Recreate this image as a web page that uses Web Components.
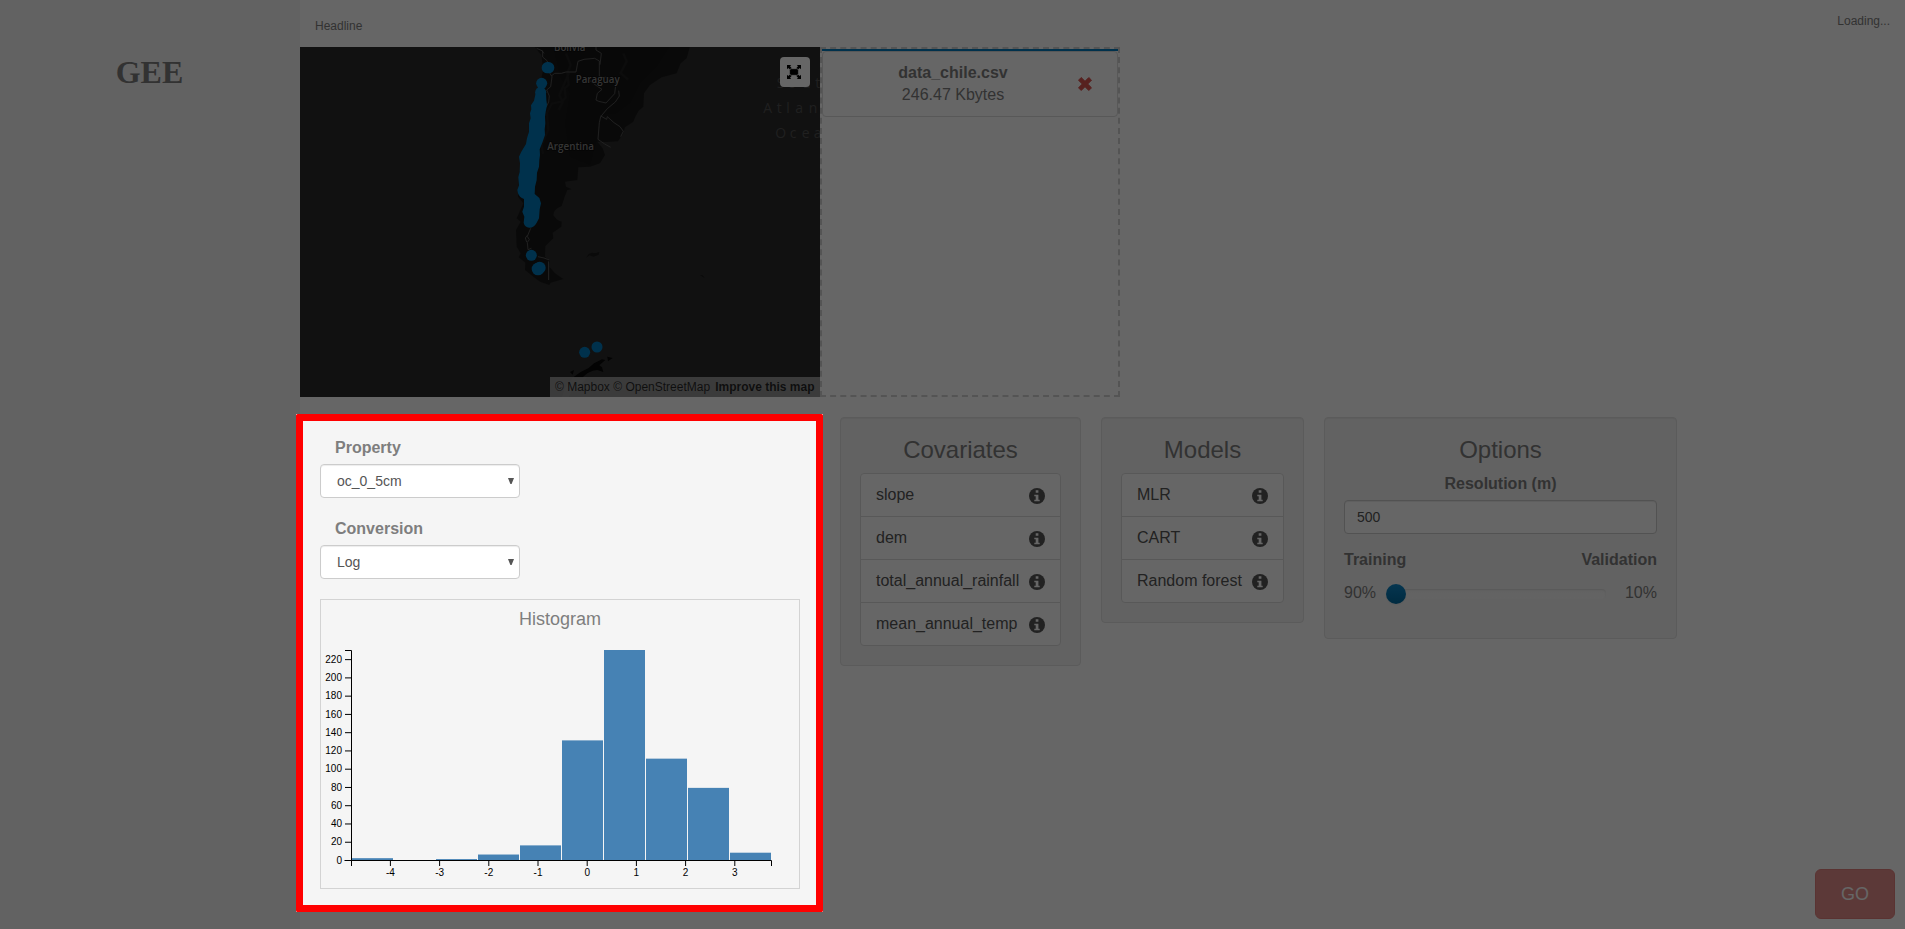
<!DOCTYPE html>
<html lang="en">
<head>
<meta charset="utf-8">
<title>GEE</title>
<style>
html,body{margin:0;height:100%;overflow:hidden;background:#fff}
body{font:16px/22px "Liberation Sans",Arial,sans-serif;color:#7e7e7e}
</style>
</head>
<body>
<gee-app></gee-app>
<script>
const define=(name,html,init)=>customElements.define(name,class extends HTMLElement{
  constructor(){super();this.attachShadow({mode:'open'}).innerHTML='<style>*{box-sizing:border-box}</style>'+html;}
  connectedCallback(){if(init)init(this,this.shadowRoot);}
});

define('side-bar',`<style>:host{display:block;width:300px;flex:none;background:#f5f5f5;padding-top:54px;box-sizing:border-box}
h1{margin:0 5px 0 0;text-align:center;font:bold 32px/37px "Liberation Serif",serif;padding-left:4px}</style><h1><slot></slot></h1>`);

define('map-view',`<style>:host{display:block;position:relative;width:520px;height:350px;background:#2b2b2b;overflow:hidden}
svg.map{display:block}
.full{position:absolute;right:10px;top:10px;width:30px;height:30px;border-radius:4px;background:#fff;display:grid;place-items:center;padding-right:2px}
.attr{position:absolute;right:0;bottom:0;height:20px;width:270px;padding:0 5.500px 0 5px;background:rgba(255,255,255,.5);font-size:12px;line-height:20px;color:rgba(0,0,0,.75);white-space:nowrap;display:flex;justify-content:space-between}
text{font-family:"Open Sans","Noto Sans",sans-serif}
.l{font-size:31px;fill:#858585;stroke:#0c0c0c;stroke-width:5px;paint-order:stroke;font-weight:600}
.o{font-size:42px;fill:#505050}
</style>
<svg class="map" width="520" height="350" viewBox="0 0 520 350"><g transform="translate(190 -7) scale(.33333)">
<path fill="#181818" d="M132 18L154 45L160 90L150 130L148 180L122 240L110 320L88 400L84 470L100 490L80 535L92 545L78 570L80 620L92 640L86 652L106 668L105 690L130 710L150 725L178 735L182 728L220 717L195 700L178 680L180 662L165 650L166 618L190 595L188 578L214 560L215 545Q198 540 190 525Q190 508 215 498L224 470L232 450L245 448L228 440L225 425L262 420L265 382L300 380L330 370L345 345L338 325L322 305L350 306L384 304L400 280L405 262L430 245L436 230L446 212L460 200L462 160L480 135L515 112L560 100L572 70L590 55L600 18Z"/>
<path fill="#131313" d="M190 18L540 18L500 80L450 130L420 190L380 220L330 225L320 300L300 375L240 350L225 250L240 160L210 110Z" opacity=".5"/>
<g fill="none" stroke="#202020" stroke-width="7" opacity=".8"><path d="M228 40l14 35-10 25 4 35-12 10 3 28-14 12-28 6-14 28 4 50-20 45 4 28M238 96l-30 70 10 20-12 24M400 40l10 24-18 35 22 20"/></g>
<g fill="none" stroke="#5c5c5c" stroke-width="2.5"><path d="M140 25l18 8 0 18 14 12 0 25 14 22-4 30-12 10 8 18-2 18-8 16M154 30l8 10M184 108l10-8 20 0 14-4 30 0 6-32 18-6 32-3 14 8 0 24 0 22 30 4 4 8 16 8-4 32-26 28-22-5-8-4 4-20 14-12-18-12-18-14M318 18l0 12 16 10-4 34M386 152l2 16-12 18-24 20-20 24-4 18-4 50 20 14 18 10M332 228l18 10 2-8 20 18 18 12 10 14-8 16M122 565l-10 24 6 10-6 8 2 22 10-4M112 586l-6 8 4 12M144 650l18 4 16 6"/><path d="M176 664v56" stroke-width="3"/></g>
<g fill="#191919"><path d="M288 654l8-12 10-4 10 2 12-4-2 8-16 6-12-4zM630 706l8 0 6 8z"/><path fill="#080808" d="M240 996l12-6-4 14zM352 950l16 4-14 10zM250 1012l22-16 24-12 16-14 24-12 10 2-18 16 8 6 4 14-18-6-14 2-16 8-14 12z"/><path fill="#666" d="M250 1012h40l-18 22-26 12-10 26h-20l10-28z" opacity=".18"/></g>
<text class="l" x="192" y="33" textLength="94" lengthAdjust="spacingAndGlyphs">Bolivia</text><text class="l" x="257" y="129" textLength="132" lengthAdjust="spacingAndGlyphs">Paraguay</text><text class="l" x="172" y="329" textLength="140" lengthAdjust="spacingAndGlyphs">Argentina</text>
<text class="o" x="860 893 936 976" y="144">Sout</text><text class="o" x="820 860 889 916 956" y="219">Atlan</text><text class="o" x="856 899 935 971" y="293">Ocea</text>
<g fill="#007cbf"><rect x="155" y="66" width="38" height="34" rx="17"/><circle cx="155" cy="130" r="16.500"/><circle cx="152" cy="157" r="16.500"/><circle cx="284" cy="937" r="16.500"/><circle cx="321" cy="921" r="16.500"/><circle cx="124" cy="646" r="16.500"/><circle cx="144" cy="687" r="19"/><circle cx="149" cy="683" r="18"/>
<path d="M137 160L168 160L169 180L171 195L167 215L165 230L166 250L164 268L165 285L158 305L149 328L150 345L148 360L147 380L141 398L140 420L135 440L134 462L148 474L153 490L149 508L147 535L140 548Q132 563 118 563Q104 562 101 548L103 530L97 515L102 500L102 477Q88 472 84 460L82 450L87 436L85 412L89 395L90 370L87 350L94 335L108 312L111 295L117 275L117 250L122 235L120 220L124 208L123 196L132 182Z"/></g>
</g></svg>
<div class="full"><svg width="14" height="14" viewBox="0 0 14 14"><path d="M0 0h4.200L3 1.300l1.800 1.900-1.600 1.600L1.300 3 0 4.200zM14 0v4.200L12.700 3l-1.900 1.800-1.600-1.600L11 1.300 9.800 0zM0 14V9.800L1.300 11l1.900-1.800 1.600 1.600L3 12.700 4.200 14zM14 14H9.800l1.200-1.300-1.800-1.900 1.600-1.600 1.900 1.800L14 9.800z"/><rect x="2.600" y="3.700" width="8.800" height="6.600" rx="1.800" stroke="#fff" stroke-width=".6"/></svg></div>
<div class="attr"><span>© Mapbox © OpenStreetMap</span><b>Improve this map</b></div>`);

define('drop-zone',`<style>:host{display:block;width:300px;height:350px;border:2px dashed #d3d3d3;box-sizing:border-box}
.bar{height:2px;background:#007cbf}
.card{height:66px;border:1px solid #ddd;border-radius:4px;display:flex;align-items:center}
.t{width:260px;text-align:center;line-height:22px}.t b{display:block}svg{display:block;margin-left:-5px}</style>
<div class="bar"></div><div class="card"><div class="t"><b>data_chile.csv</b><span>246.47 Kbytes</span></div><svg width="14" height="14" viewBox="0 0 14 14"><path d="M3.200.5L7 4.300 10.800.5l2.700 2.700L9.700 7l3.800 3.800-2.700 2.700L7 9.700l-3.800 3.800L.5 10.800 4.300 7 .5 3.200z" fill="#d9534f" stroke="#d9534f" stroke-linejoin="round"/></svg></div>`);

define('well-panel',`<style>:host{display:block;background:#f5f5f5;border:1px solid #e3e3e3;border-radius:4px;padding:19px;box-sizing:border-box;box-shadow:inset 0 1px 1px rgba(0,0,0,.05);flex:none}
h3{margin:0 0 10px;font-size:24px;line-height:26px;font-weight:400;text-align:center}</style><h3></h3><slot></slot>`,
(h,r)=>r.querySelector('h3').textContent=h.getAttribute('heading'));

define('info-item',`<style>:host{display:flex;justify-content:space-between;height:44px;margin-bottom:-1px;padding:10px 15px;border:1px solid #ddd;background:#fff;color:#555;box-sizing:border-box;line-height:22px}
:host(:first-of-type){border-radius:4px 4px 0 0}:host(:last-of-type){border-radius:0 0 4px 4px;margin-bottom:0}
svg{margin-top:4px}</style><slot></slot><svg width="16" height="16" viewBox="0 0 16 16"><circle cx="8" cy="8" r="8" fill="#555"/><path fill="#fff" d="M6.700 2.300h2.700v2.400H6.700zM5.300 6.700h4.100v5h1.300v1.600H5.300v-1.600h1.400V8.300H5.300z"/></svg>`);

define('select-field',`<style>:host{display:block}label{display:block;font-weight:700;line-height:22px;padding:1px 0 0 15px;margin-bottom:5px}
.s{width:200px;height:34px;border:1px solid #ccc;border-radius:4px;background:#fff;box-shadow:inset 0 1px 1px rgba(0,0,0,.075);font-size:14px;line-height:32px;color:#555;padding:0 5px 0 16px;display:flex;justify-content:space-between;align-items:center}</style>
<label></label><div class="s"><slot></slot><svg width="6" height="6" viewBox="0 0 6 6"><path d="M0 0h6L3.600 6H2.400z" fill="#555"/></svg></div>`,
(h,r)=>r.querySelector('label').textContent=h.getAttribute('label'));

define('histo-gram',`<style>:host{display:block;width:480px;height:290px;border:1px solid #d3d3d3;box-sizing:border-box;padding-top:9px}
h4{margin:0;font-size:18px;line-height:20px;font-weight:400;text-align:center}svg{display:block}text{font-size:10px;fill:#000}</style><h4>Histogram</h4><svg width="478" height="254"></svg>`,
(h,r)=>{
  const H=210,W=420,X=31,Y=21;let s='';
  [2,0,1,6,16,131,230,111,79,8].forEach((v,i)=>{const b=v*H/230;s+=`<rect x="${X+i*42}" y="${Y+H-b}" width="41" height="${b}" fill="steelblue"/>`;});
  for(let v=0;v<=220;v+=20){const y=Y+H-v*H/230+.5;s+=`<path d="M${X-7} ${y}h7" stroke="#000"/><text x="${X-10}" y="${y+3.2}" text-anchor="end">${v}</text>`;}
  for(let v=-4;v<=3;v++){const x=X+235.200+v*49.200;s+=`<path d="M${x} ${Y+H}v6" stroke="#000"/><text x="${x}" y="${Y+H+16}" text-anchor="middle">${v}</text>`;}
  s+=`<path d="M${X-7} ${Y+.5}h6.500v${H}h-7M${X-.5} ${Y+H+6}v-5.500h${W}v5.500" fill="none" stroke="#000"/>`;
  r.querySelector('svg').innerHTML=s;
});

define('property-panel',`<style>:host{display:block;position:relative;z-index:2;width:527px;height:498px;margin:-3px 0 0 -4px;background:#fff;flex:none}
.b{height:100%;border:7px solid #f00;border-radius:1.500px;background:#f5f5f5;padding:15px 17px;display:flex;flex-direction:column}
select-field{margin-bottom:19px}histo-gram{margin-top:1px}</style>
<div class="b"><select-field label="Property">oc_0_5cm</select-field><select-field label="Conversion">Log</select-field><histo-gram></histo-gram></div>`);

define('model-options',`<style>:host{display:block}.r{display:flex;justify-content:space-between}
.c{text-align:center}.i{height:34px;border:1px solid #ccc;border-radius:4px;background:#fff;box-shadow:inset 0 1px 1px rgba(0,0,0,.075);font-size:14px;line-height:32px;padding:0 12px;color:#555;margin:5px 0 15px}
.v{margin-top:11px;align-items:center}.k{width:220px;height:20px;margin:2px 0 0 10px;display:flex;align-items:center;position:relative}
.k i{height:10px;flex:1;margin-left:10px;background:linear-gradient(#f5f5f5,#f9f9f9);box-shadow:inset 0 1px 2px rgba(0,0,0,.1);border-radius:4px}
.k u{position:absolute;left:0;top:0;width:20px;height:20px;border-radius:50%;background:linear-gradient(#0f87c8,#00699f);box-shadow:0 1px 2px rgba(0,0,0,.05)}</style>
<div class="c"><b>Resolution (m)</b></div><div class="i">500</div><div class="r"><b>Training</b><b>Validation</b></div>
<div class="r v"><span>90%</span><div class="k"><i></i><u></u></div><span style="margin-left:auto">10%</span></div>`);

define('go-button',`<style>:host{position:absolute;right:10px;bottom:10px;width:80px;height:50px;border-radius:6px;background:#d9534f;border:1px solid #d43f3a;opacity:.65;color:#fff;font-size:18px;display:grid;place-items:center;box-sizing:border-box}</style><slot></slot>`);

define('gee-app',`<style>:host{display:flex;width:100%;height:100vh;position:relative;overflow:hidden}
main{flex:1;min-width:0}header{box-sizing:border-box;height:47px;display:flex;justify-content:space-between;font-size:12px;line-height:17px;padding:18px 15px 0 15px}
.load{margin-top:-5px}.row{display:flex;align-items:flex-start}.two{margin-top:20px;gap:20px}
.shade{position:absolute;inset:0;background:rgba(0,0,0,.6);z-index:1}
property-panel{margin-right:-3px}</style>
<side-bar>GEE</side-bar><main><header><span>Headline</span><span class="load">Loading...</span></header>
<div class="row"><map-view></map-view><drop-zone></drop-zone></div>
<div class="row two"><property-panel></property-panel>
<well-panel heading="Covariates" style="width:241px;height:249px"><info-item>slope</info-item><info-item>dem</info-item><info-item>total_annual_rainfall</info-item><info-item>mean_annual_temp</info-item></well-panel>
<well-panel heading="Models" style="width:203px;height:206px"><info-item>MLR</info-item><info-item>CART</info-item><info-item>Random forest</info-item></well-panel>
<well-panel heading="Options" style="width:353px;height:222px"><model-options></model-options></well-panel></div></main>
<go-button>GO</go-button><div class="shade"></div>`);
</script>
</body>
</html>
